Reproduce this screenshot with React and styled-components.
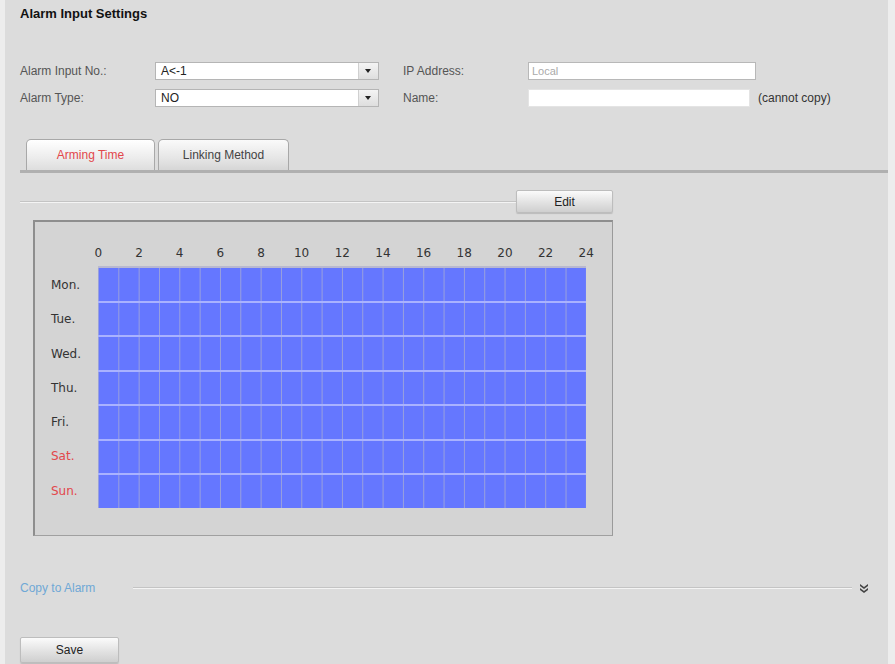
import styled, { createGlobalStyle } from "styled-components";

const GlobalStyle = createGlobalStyle`
  body {
    margin: 0;
    background: #ededed;
    font-family: "Liberation Sans", Arial, sans-serif;
  }
`;

const HOURS = [0, 2, 4, 6, 8, 10, 12, 14, 16, 18, 20, 22, 24];
const DAYS = [
  { name: "Mon.", weekend: false },
  { name: "Tue.", weekend: false },
  { name: "Wed.", weekend: false },
  { name: "Thu.", weekend: false },
  { name: "Fri.", weekend: false },
  { name: "Sat.", weekend: true },
  { name: "Sun.", weekend: true },
];

const Chevrons = () => (
  <svg width="8" height="11" viewBox="0 0 8 11">
    <path d="M0 1 L4 4 L8 1 L8 3 L4 6 L0 3 Z" fill="#444" />
    <path d="M0 5 L4 8 L8 5 L8 7 L4 10 L0 7 Z" fill="#444" />
  </svg>
);

const App = () => {
  return (
    <>
      <GlobalStyle />
      <Panel>
        <Title>Alarm Input Settings</Title>
        <Form>
          <Row>
            <Label>Alarm Input No.:</Label>
            <Select>
              <SelectText>A&lt;-1</SelectText>
              <Arrow />
            </Select>
            <Label $second>IP Address:</Label>
            <Input $width={228} $muted>Local</Input>
          </Row>
          <Row>
            <Label>Alarm Type:</Label>
            <Select>
              <SelectText>NO</SelectText>
              <Arrow />
            </Select>
            <Label $second>Name:</Label>
            <Input $width={222} />
            <Note>(cannot copy)</Note>
          </Row>
        </Form>
        <Tabs>
          <Tab $active>Arming Time</Tab>
          <Tab>Linking Method</Tab>
        </Tabs>
        <EditRow>
          <Rule />
          <Button $width={97} $height={23}>Edit</Button>
        </EditRow>
        <Schedule>
          <HourRow>
            {HOURS.map((h) => (
              <Hour key={h}>{h}</Hour>
            ))}
          </HourRow>
          <Body>
            <DayCol>
              {DAYS.map((d) => (
                <Day key={d.name} $weekend={d.weekend}>
                  {d.name}
                </Day>
              ))}
            </DayCol>
            <Grid>
              {DAYS.map((d) => (
                <GridRow key={d.name} />
              ))}
            </Grid>
          </Body>
        </Schedule>
        <CopyRow>
          <CopyLink>Copy to Alarm</CopyLink>
          <Rule />
          <Chevrons />
        </CopyRow>
        <SaveButton $width={99} $height={26}>Save</SaveButton>
      </Panel>
    </>
  );
};

const Panel = styled.div`
  margin-left: 5px;
  width: 883px;
  min-height: 664px;
  box-sizing: border-box;
  background: #dcdcdc;
  padding: 6px 0 0 15px;
  display: flex;
  flex-direction: column;
  align-items: flex-start;
`;

const Title = styled.div`
  font-size: 13px;
  font-weight: bold;
  line-height: 15px;
  color: #111;
`;

const Form = styled.div`
  margin-top: 41px;
  display: flex;
  flex-direction: column;
  gap: 9px;
`;

const Row = styled.div`
  display: flex;
  align-items: center;
  height: 18px;
`;

const Label = styled.div`
  width: ${(p) => (p.$second ? "125px" : "135px")};
  margin-left: ${(p) => (p.$second ? "24px" : "0")};
  font-size: 12px;
  color: #555;
`;

const Select = styled.div`
  width: 224px;
  height: 18px;
  box-sizing: border-box;
  display: flex;
  background: #fff;
  border: 1px solid #b5b5b5;
`;

const SelectText = styled.div`
  flex: 1;
  padding-left: 5px;
  font-size: 12px;
  line-height: 16px;
  color: #222;
`;

const Arrow = styled.div`
  width: 19px;
  background: linear-gradient(#f4f4f4, #dedede);
  border-left: 1px solid #d0d0d0;
  position: relative;
  &::after {
    content: "";
    position: absolute;
    left: 6px;
    top: 6px;
    border-left: 3px solid transparent;
    border-right: 3px solid transparent;
    border-top: 4px solid #222;
  }
`;

const Input = styled.div`
  width: ${(p) => p.$width}px;
  height: 18px;
  box-sizing: border-box;
  background: #fff;
  border: 1px solid ${(p) => (p.$muted ? "#b8b8b8" : "#e4e4e4")};
  padding-left: 3px;
  font-size: 11px;
  line-height: 16px;
  color: #aaa;
`;

const Note = styled.div`
  margin-left: 8px;
  font-size: 12px;
  color: #333;
`;

const Tabs = styled.div`
  margin-top: 32px;
  align-self: stretch;
  display: flex;
  gap: 3px;
  padding-left: 6px;
  border-bottom: 3px solid #b0b0b0;
`;

const Tab = styled.div`
  width: ${(p) => (p.$active ? "129px" : "131px")};
  height: 31px;
  box-sizing: border-box;
  border: 1px solid #a8a8a8;
  border-bottom: none;
  border-radius: 5px 5px 0 0;
  background: ${(p) =>
    p.$active
      ? "linear-gradient(#ffffff, #ececec 60%, #dedede)"
      : "linear-gradient(#fafafa, #e6e6e6 60%, #d6d6d6)"};
  display: flex;
  align-items: center;
  justify-content: center;
  font-size: 12px;
  color: ${(p) => (p.$active ? "#e2474b" : "#444")};
`;

const EditRow = styled.div`
  margin-top: 17px;
  width: 593px;
  display: flex;
  align-items: center;
`;

const Rule = styled.div`
  flex: 1;
  height: 1px;
  background: #c4c4c4;
  border-bottom: 1px solid #f4f4f4;
`;

const Button = styled.div`
  width: ${(p) => p.$width}px;
  height: ${(p) => p.$height}px;
  box-sizing: border-box;
  border: 1px solid #bdbdbd;
  border-radius: 2px;
  background: linear-gradient(#fbfbfb, #e2e2e2 55%, #cfcfcf);
  box-shadow: 0 1px 1px rgba(0, 0, 0, 0.15);
  display: flex;
  align-items: center;
  justify-content: center;
  font-size: 12px;
  color: #222;
`;

const SaveButton = styled(Button)`
  margin-top: 41px;
`;

const Schedule = styled.div`
  margin: 7px 0 0 13px;
  width: 580px;
  height: 316px;
  box-sizing: border-box;
  background: #d4d4d4;
  border-top: 2px solid #8e8e8e;
  border-left: 2px solid #8e8e8e;
  border-right: 1px solid #9a9a9a;
  border-bottom: 1px solid #a0a0a0;
  display: flex;
  flex-direction: column;
`;

const HourRow = styled.div`
  height: 46px;
  box-sizing: border-box;
  padding: 0 0 8px 43px;
  display: flex;
  align-items: flex-end;
`;

const Hour = styled.div`
  width: 40.67px;
  text-align: center;
  font-family: "DejaVu Sans", Verdana, sans-serif;
  font-size: 12px;
  color: #333;
`;

const Body = styled.div`
  display: flex;
`;

const DayCol = styled.div`
  width: 63px;
  display: flex;
  flex-direction: column;
`;

const Day = styled.div`
  height: 34.28px;
  padding-left: 16px;
  display: flex;
  align-items: center;
  font-family: "DejaVu Sans", Verdana, sans-serif;
  font-size: 12px;
  color: ${(p) => (p.$weekend ? "#e2474b" : "#333")};
`;

const Grid = styled.div`
  width: 488px;
  height: 240px;
  display: flex;
  flex-direction: column;
  background-color: #6577ff;
  background-image: linear-gradient(to right, #9aa1dc 1px, transparent 1px);
  background-size: 20.333px 100%;
  box-shadow: 0 -2px 0 #b8b8d0;
`;

const GridRow = styled.div`
  flex: 1;
  border-top: 2px solid #a9b2ff;
  &:first-child {
    border-top: none;
  }
`;

const CopyRow = styled.div`
  margin-top: 44px;
  width: 848px;
  height: 16px;
  display: flex;
  align-items: center;
  gap: 8px;
`;

const CopyLink = styled.div`
  width: 105px;
  font-size: 12px;
  color: #6fa8d6;
`;

export default App;
